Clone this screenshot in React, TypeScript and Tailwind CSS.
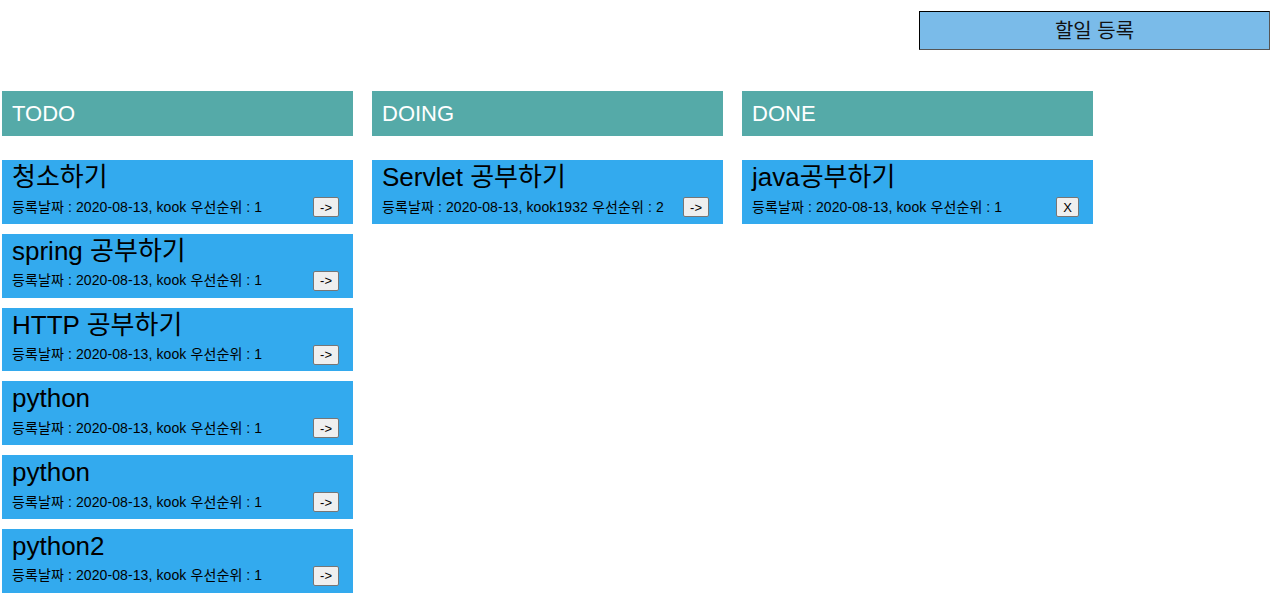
import React from "react";

type Card = { title: string; meta: string; btn: string };

const todo: Card[] = [
  { title: "청소하기", meta: "등록날짜 : 2020-08-13, kook 우선순위 : 1", btn: "->" },
  { title: "spring 공부하기", meta: "등록날짜 : 2020-08-13, kook 우선순위 : 1", btn: "->" },
  { title: "HTTP 공부하기", meta: "등록날짜 : 2020-08-13, kook 우선순위 : 1", btn: "->" },
  { title: "python", meta: "등록날짜 : 2020-08-13, kook 우선순위 : 1", btn: "->" },
  { title: "python", meta: "등록날짜 : 2020-08-13, kook 우선순위 : 1", btn: "->" },
  { title: "python2", meta: "등록날짜 : 2020-08-13, kook 우선순위 : 1", btn: "->" },
];
const doing: Card[] = [
  { title: "Servlet 공부하기", meta: "등록날짜 : 2020-08-13, kook1932 우선순위 : 2", btn: "->" },
];
const done: Card[] = [
  { title: "java공부하기", meta: "등록날짜 : 2020-08-13, kook 우선순위 : 1", btn: "X" },
];

function CardView({ c }: { c: Card }) {
  return (
    <div className="h-[63.75px] bg-[#33aaee] flex flex-col pl-[10px]">
      <div className="h-[34px] leading-[34px] text-[26px] text-black">{c.title}</div>
      <div className="h-[26px] flex items-center justify-between pr-[14px]">
        <span className="text-[14px] text-black tracking-[0.1px]">{c.meta}</span>
        <button className="h-[20px] px-[6px] text-[13px] leading-none bg-[#efefef] border border-[#767676] rounded-[2px] text-black">
          {c.btn}
        </button>
      </div>
    </div>
  );
}

function Column({ name, cards }: { name: string; cards: Card[] }) {
  return (
    <div className="w-[351px] flex flex-col">
      <div className="h-[45px] bg-[#55aaa8] text-white text-[22px] leading-[45px] pl-[10px]">{name}</div>
      <div className="mt-[24px] flex flex-col gap-[10px]">
        {cards.map((c, i) => (
          <CardView key={i} c={c} />
        ))}
      </div>
    </div>
  );
}

export default function App() {
  return (
    <div
      className="w-[1280px] bg-white"
      style={{ fontFamily: '"Liberation Sans", "Noto Sans CJK KR", Arial, sans-serif' }}
    >
      <div className="flex justify-end pt-[11px] pr-[10px]">
        <button className="w-[351px] h-[39px] bg-[#7abbe9] border border-black border-r-[#555] border-b-[#555] text-[20px] text-[#111]">
          할일 등록
        </button>
      </div>
      <div className="flex gap-[19px] pl-[2px] mt-[41px]">
        <Column name="TODO" cards={todo} />
        <Column name="DOING" cards={doing} />
        <Column name="DONE" cards={done} />
      </div>
    </div>
  );
}
